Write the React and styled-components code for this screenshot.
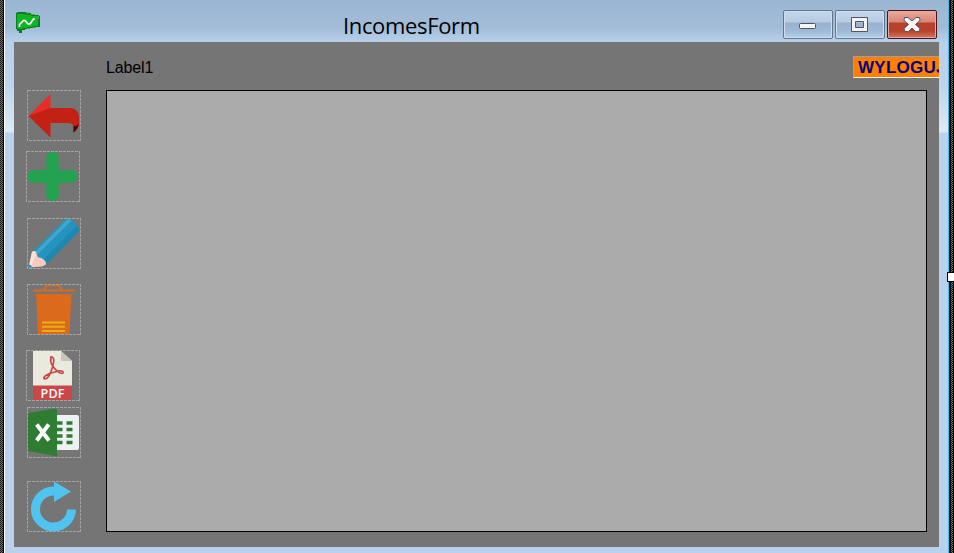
import React from "react";
import styled, { createGlobalStyle } from "styled-components";

const Global = createGlobalStyle`
  *{box-sizing:border-box}
  body{margin:0;overflow:hidden;background:#050505}
`;
const Desktop = styled.div`
  width:954px;height:553px;display:flex;position:relative;overflow:hidden;background:#080808;
`;
const Edge = styled.div`
  width:${p => p.$w}px;flex:none;
  background:repeating-conic-gradient(#707070 0 25%,#161616 0 50%) 0 0/2px 2px;
`;
const Line = styled.div`width:${p => p.$w}px;flex:none;background:${p => p.$c};`;
const Window = styled.div`
  width:943px;flex:none;display:flex;flex-direction:column;padding:0 9px 6px;
  background:
    linear-gradient(#9ab5d2 0,#a2bcd8 22px,#a1bbd7 27px,#b8d0ea 42px,#b9d1ea 60px,#bdd4ec 85px,#dce8f5 130px,#dce8f5 132px,#b9d1ea 133px);
`;
const TitleBar = styled.header`height:42px;flex:none;display:flex;align-items:flex-start;`;
const Logo = styled.svg`width:26px;height:24px;margin:11px 0 0 1px;flex:none;`;
const Title = styled.h1`
  margin:10px 0 0 302px;width:440px;font:400 22px/30px "Open Sans","Noto Sans",sans-serif;
  letter-spacing:-.35px;color:#000;
`;
const Controls = styled.div`display:flex;gap:2px;margin-top:10px;`;
const Control = styled.button`
  width:50px;height:29px;padding:0;border:1px solid ${p => p.$close ? "#4b141d" : "#65758c"};border-radius:2px;
  box-shadow:inset 0 0 0 1px ${p => p.$close ? "#e6a99f" : "#cfdeee"};
  background:${p => p.$close
    ? "linear-gradient(#e9aaa0 0,#d98675 11px,#b8412b 12px,#b8432c 20px,#cf7764 27px)"
    : "linear-gradient(#c4d6e9 0,#b6cce3 11px,#98b1cf 12px,#9eb9d6 20px,#b8d0e9 27px)"};
  svg{display:block;width:48px;height:27px}
`;
const Form = styled.main`
  width:925px;height:505px;background:#757575;display:flex;overflow:hidden;flex:none;
`;
const Sidebar = styled.nav`width:92px;flex:none;display:flex;flex-direction:column;padding:48px 0 0 12px;`;
const Picture = styled.div`
  width:54px;height:51px;flex:none;margin-top:${p => p.$gap}px;margin-left:${p => p.$left}px;
  svg{display:block;width:54px;height:51px}
`;
const Body = styled.section`flex:none;width:833px;display:flex;flex-direction:column;`;
const Header = styled.div`height:48px;display:flex;justify-content:space-between;flex:none;`;
const Label = styled.span`
  font:16px/20px "Liberation Sans",Arial,sans-serif;letter-spacing:-.15px;margin-top:16px;color:#000;
`;
const Logout = styled.button`
  width:86px;height:22px;margin:14px 0 0;padding:1px 0 0 4px;overflow:hidden;white-space:nowrap;text-align:left;
  border:1px solid #a0a0a0;border-right:0;border-bottom-color:#fff;background:#ff8000;color:#000080;
  font:bold 17px/20px "Liberation Sans",Arial,sans-serif;letter-spacing:.25px;
`;
const DataGrid = styled.div`width:821px;height:442px;border:1px solid #000;background:#ababab;`;
const Handle = styled.div`
  position:absolute;left:947px;top:272px;width:9px;height:10px;background:#fff;border:1px solid #000;
`;

const Art = {
  back: <>
    <path d="M22 18H44Q52 19 52 28V34Q52 39 46.500 42.500V37Q46 33 41 33H22Z" fill="#c42115" />
    <path d="M46.500 35.500Q50 38 52 33Q51 39 46.500 42.500Z" fill="#480807" />
    <path d="M23.500 4V19L1.500 26Z" fill="#e92c2a" />
    <path d="M1.500 26L23.500 18V47.500Z" fill="#c42115" />
  </>,
  add: <path d="M26.500 7V44M7.500 25.500H45.500" stroke="#23a34f" strokeWidth="12.500" strokeLinecap="round" />,
  edit: <>
    <path d="M5 34L38 1.500Q41 0 44 1L52 9.500Q53.500 12 51.500 14L19 46.500Z" fill="#2394bf" />
    <path d="M8 34L41 1L44.500 2.500L11 36Z" fill="#45a6ca" />
    <path d="M16 42L49.500 8L52 10.500Q53 12 51 14L19 46.500Z" fill="#2087b0" />
    <path d="M1.500 49.500L5 34Q7 32 9 34L11 39.500Q14 39 16 41Q19.500 43 19 46.500L15 48.500Z" fill="#f8cbc0" />
    <path d="M2 49L5 34L8 33L9 37L4 48Z" fill="#fde0d7" />
    <path d="M1 50L2 46.500Q4.500 46.500 5 49Z" fill="#2394bf" />
  </>,
  trash: <>
    <path d="M17.500 6.500Q18 1.500 21.500 1.500H30.500Q34 1.500 34.500 6.500" fill="none" stroke="#dc6a1c" strokeWidth="2" />
    <path d="M6.500 6.500H47" stroke="#dc6a1c" strokeWidth="2" strokeLinecap="round" />
    <path d="M9 10H44.500L42.500 50H11Z" fill="#dc6a1c" />
    <path d="M15 38.500H38M15 42.700H38M15 47H38" stroke="#e9ae12" strokeWidth="2" />
  </>,
  pdf: <>
    <path d="M7 1H35L46 11V50H7Z" fill="#eae9dd" />
    <path d="M35 1V11H46Z" fill="#c8c7b7" />
    <path d="M7 35.500H46V50H7Z" fill="#cb4648" />
    <path d="M25 9Q24 6 26 7Q29 8 27 15C25 23 22 29 19 29C15 28 22 23 29 22C34 20 38 21 37 23C35 25 29 20 26 15Q24 11 25 9Z" fill="none" stroke="#ca4748" strokeWidth="1.700" />
    <text x="26.500" y="48" textAnchor="middle" fontFamily="Open Sans, sans-serif" fontWeight="600" fontSize="12.500" fill="#fff" textLength="24">PDF</text>
  </>,
  excel: <>
    <path d="M28 8H50Q52 8 52 10V41Q52 43 50 43H28Z" fill="#edf1f4" />
    <path d="M1 6L28 1.500Q30 1 30 3V48Q30 50 28 49L1 44Z" fill="#2f7d32" />
    <path d="M29 16H35.500M29 22.500H35.500M29 29H35.500M29 35.500H35.500M39.500 16H45.500M39.500 22.500H45.500M39.500 29H45.500M39.500 35.500H45.500" stroke="#2f7d32" strokeWidth="3.500" />
    <path d="M9.700 17.500L22 33.500M21.700 17.500L9.700 33.500" stroke="#fff" strokeWidth="4" />
  </>,
  refresh: <>
    <path d="M27 10.100A18 18 0 1 0 44.500 28.500" fill="none" stroke="#50c4ef" strokeWidth="9" />
    <path d="M27 .500L44 10.500L27 21Z" fill="#50c4ef" />
  </>,
};

const items = [["back", 1, 0], ["add", 0, 10], ["edit", 1, 16], ["trash", 1, 15], ["pdf", 0, 15], ["excel", 1, 6], ["refresh", 1, 23]];

function PictureBox({ name, left, gap }) {
  return (
    <Picture $left={left} $gap={gap}>
      <svg viewBox="0 0 54 51">
        {Art[name]}
        <rect x=".5" y=".5" width="53" height="50" fill="none" stroke="#a4a4a4" strokeDasharray="3 1" shapeRendering="crispEdges" />
      </svg>
    </Picture>
  );
}

export default function App() {
  return (
    <>
      <Global />
      <Desktop>
        <Edge $w={3} />
        <Line $w={1} $c="#080808" />
        <Line $w={1} $c="#fff" />
        <Window>
          <TitleBar>
            <Logo viewBox="0 0 26 24">
              <path d="M1 2L3 1H11L12 2H16V3H20V4H24V5H25V16H20V17H15V18H10V19H7V22H4V20H2V18H1Z" fill="#087f1e" />
              <path d="M2 3H11V4H16V5H23V15H18V16H12V17H7V18H3V17H2Z" fill="#0eb625" />
              <path d="M11 2H15M16 3.500H20M23.500 5V8M18 16.500H21M12 17.500H15" stroke="#4aa657" />
              <path d="M4.500 16V13.500L8.500 9.500H10L13 13H15L18.500 8H20" fill="none" stroke="#fff" strokeWidth="1.700" />
            </Logo>
            <Title>IncomesForm</Title>
            <Controls>
              <Control aria-label="Minimize"><svg viewBox="0 0 48 27"><rect x="15.500" y="12.500" width="16" height="5" rx="1" fill="#f5f5f5" stroke="#505463" /></svg></Control>
              <Control aria-label="Maximize"><svg viewBox="0 0 48 27"><path fillRule="evenodd" d="M15.500 6.500H31.500V20.500H15.500ZM19.500 10.500V16.500H27.500V10.500Z" fill="#f3f3f3" stroke="#505463" /></svg></Control>
              <Control $close aria-label="Close"><svg viewBox="0 0 48 27"><path d="M16.500 6.500H20L24 10L28 6.500H31.500L32 9.500L27.500 13.500L32 17.500L31 20.500H27.500L24 17L20.500 20.500H17L16 17.500L20.500 13.500L16 9.500Z" fill="#f5f5f5" stroke="#555162" /></svg></Control>
            </Controls>
          </TitleBar>
          <Form>
            <Sidebar>{items.map(([name, left, gap]) => <PictureBox key={name} name={name} left={left} gap={gap} />)}</Sidebar>
            <Body>
              <Header><Label>Label1</Label><Logout>WYLOGUJ</Logout></Header>
              <DataGrid />
            </Body>
          </Form>
        </Window>
        <Line $w={1} $c="#32c5ee" />
        <Line $w={2} $c="#080808" />
        <Edge $w={2} />
        <Line $w={1} $c="#080808" />
        <Handle />
      </Desktop>
    </>
  );
}
